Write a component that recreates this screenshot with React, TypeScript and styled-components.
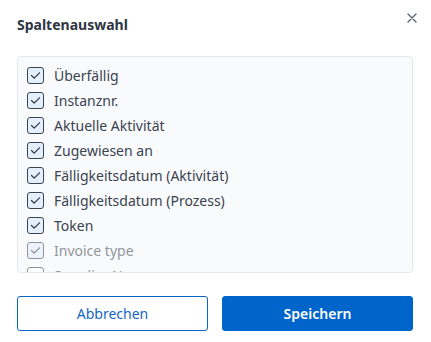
import React from "react";
import styled, { createGlobalStyle } from "styled-components";

const GlobalStyle = createGlobalStyle`
	body {
		margin: 0;
		background: #ffffff;
		font-family: "Noto Sans", "Liberation Sans", sans-serif;
	}
`;

const columns = [
	{ label: "Überfällig", checked: true },
	{ label: "Instanznr.", checked: true },
	{ label: "Aktuelle Aktivität", checked: true },
	{ label: "Zugewiesen an", checked: true },
	{ label: "Fälligkeitsdatum (Aktivität)", checked: true },
	{ label: "Fälligkeitsdatum (Prozess)", checked: true },
	{ label: "Token", checked: true },
	{ label: "Invoice type", checked: true, faded: true },
	{ label: "Supplier Name", checked: false, faded: true },
];

const App = (): JSX.Element => {
	return (
		<>
			<GlobalStyle />
			<Dialog>
				<Header>
					<Title>Spaltenauswahl</Title>
					<CloseButton aria-label="Schließen">
						<svg width="10" height="10" viewBox="0 0 10 10">
							<path d="M1 1L9 9M9 1L1 9" stroke="#5b6574" strokeWidth="1.4" strokeLinecap="round" />
						</svg>
					</CloseButton>
				</Header>
				<List>
					{columns.map((col) => (
						<Row key={col.label} faded={col.faded}>
							<Box checked={col.checked}>
								{col.checked && (
									<svg width="11" height="9" viewBox="0 0 11 9">
										<path d="M1.5 4.5L4.2 7.2L9.5 1.8" fill="none" stroke="#2f3744" strokeWidth="1.2" strokeLinecap="round" strokeLinejoin="round" />
									</svg>
								)}
							</Box>
							<Label>{col.label}</Label>
						</Row>
					))}
				</List>
				<Footer>
					<SecondaryButton>Abbrechen</SecondaryButton>
					<PrimaryButton>Speichern</PrimaryButton>
				</Footer>
			</Dialog>
		</>
	);
};

export default App;

const Dialog = styled.div`
	width: 431px;
	height: 342px;
	box-sizing: border-box;
	padding: 14px 18px 11px 17px;
	display: flex;
	flex-direction: column;
`;

const Header = styled.div`
	display: flex;
	align-items: flex-start;
	justify-content: space-between;
	height: 22px;
	margin-bottom: 20px;
`;

const Title = styled.h2`
	margin: 0;
	font-size: 14px;
	line-height: 22px;
	font-weight: 700;
	color: #2e3643;
`;

const CloseButton = styled.button`
	border: none;
	background: none;
	padding: 0;
	margin: -2px -5px 0 0;
	width: 12px;
	height: 12px;
	display: flex;
	align-items: center;
	justify-content: center;
	cursor: pointer;
`;

const List = styled.div`
	height: 217px;
	box-sizing: border-box;
	border: 1px solid #e6e8eb;
	border-radius: 4px;
	background: #f9fafb;
	padding: 6px 9px 4px;
	overflow: hidden;
`;

const Row = styled.label<{ faded?: boolean }>`
	display: flex;
	align-items: center;
	gap: 10px;
	height: 25px;
	opacity: ${(p) => (p.faded ? 0.55 : 1)};
`;

const Box = styled.span<{ checked?: boolean }>`
	width: 17px;
	height: 17px;
	box-sizing: border-box;
	border: 1.5px solid #3b4350;
	border-radius: 3px;
	background: ${(p) => (p.checked ? "#e3effd" : "#ffffff")};
	display: flex;
	align-items: center;
	justify-content: center;
	flex-shrink: 0;
`;

const Label = styled.span`
	font-size: 14px;
	color: #3a4350;
	white-space: nowrap;
`;

const Footer = styled.div`
	margin-top: auto;
	display: grid;
	grid-template-columns: 1fr 1fr;
	gap: 14px;
`;

const BaseButton = styled.button`
	height: 35px;
	border-radius: 3px;
	font-family: inherit;
	font-size: 14px;
	cursor: pointer;
`;

const SecondaryButton = styled(BaseButton)`
	background: #ffffff;
	border: 1px solid #0a66c9;
	color: #1467c8;
`;

const PrimaryButton = styled(BaseButton)`
	background: #0065cb;
	border: 1px solid #0065cb;
	color: #ffffff;
	font-weight: 600;
`;
